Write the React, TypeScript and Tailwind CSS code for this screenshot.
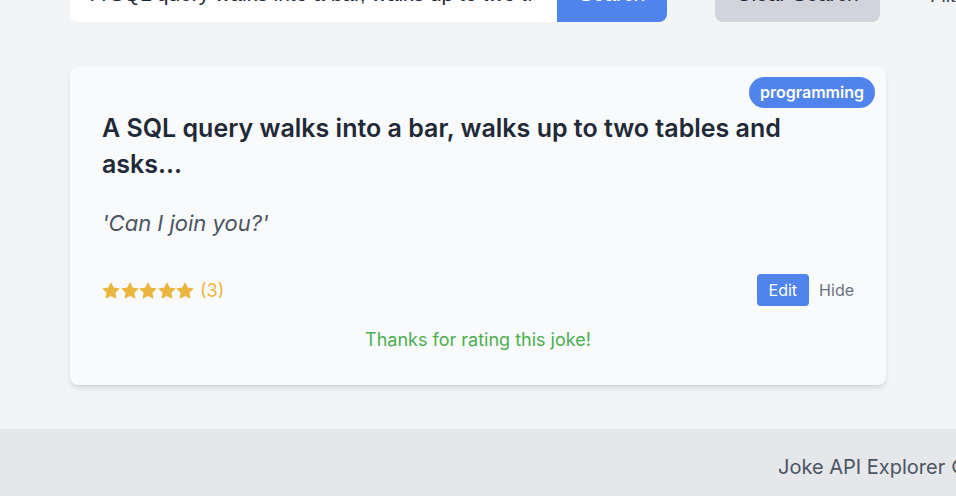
import React from "react";

function Star() {
  return (
    <svg width="18" height="17" viewBox="2 2 20 19.2" fill="#ebb63f" className="shrink-0">
      <path d="M12 2l3.09 6.26L22 9.27l-5 4.87 1.18 6.88L12 17.77l-6.18 3.25L7 14.14 2 9.27l6.91-1.01L12 2z" />
    </svg>
  );
}

export default function App() {
  return (
    <div
      className="w-[956px] h-[496px] overflow-hidden bg-[#f3f4f6]"
      style={{ fontFamily: "Inter, 'Noto Sans', sans-serif" }}
    >
      <div className="px-[70px]">
        <div
          className="-mt-[34px] flex w-[1000px] items-center whitespace-nowrap"
          style={{ fontFamily: "'Liberation Sans', Arial, sans-serif" }}
        >
          <div className="flex h-[56px] w-[487px] shrink-0 items-center overflow-hidden rounded-l-lg bg-white pl-[21px] pr-[26px] text-[21px] text-[#1f2937]">
            <span className="block overflow-hidden">A SQL query walks into a bar, walks up to two tables and asks...</span>
          </div>
          <div className="flex h-[56px] w-[110px] shrink-0 items-center justify-center rounded-r-lg bg-[#4f84ed] text-[21px] text-white">
            Search
          </div>
          <div className="ml-[48px] flex h-[56px] w-[165px] shrink-0 items-center justify-center rounded-lg bg-[#d1d5db] text-[21px] text-[#1f2937]">
            Clear Search
          </div>
          <div className="ml-[50px] mt-[4px] shrink-0 text-[19px] text-[#374151]">Filter by category:</div>
        </div>

        <div className="relative mt-[45px] rounded-lg bg-[#f9fafb] px-8 pt-[43px] pb-[31px] shadow-md">
          <span className="absolute right-[11px] top-[10px] rounded-full bg-[#4f84ed] px-[11px] py-[5px] text-[16px] font-semibold leading-[21px] text-white">
            programming
          </span>
          <h2 className="pr-[60px] text-[25px] font-semibold leading-9 text-[#1f2937]">
            A SQL query walks into a bar, walks up to two tables and asks...
          </h2>
          <p className="mt-[26px] text-[22px] italic leading-[30px] text-[#4b5563]">'Can I join you?'</p>
          <div className="mt-[36px] flex items-center justify-between">
            <div className="flex items-center">
              <div className="flex gap-[0.5px]">
                <Star />
                <Star />
                <Star />
                <Star />
                <Star />
              </div>
              <span className="ml-[6px] text-[18px] text-[#ebb63f]">(3)</span>
            </div>
            <div className="flex items-center">
              <button className="h-[32px] rounded bg-[#4f84ed] px-3 text-[16px] text-white">Edit</button>
              <span className="ml-[10px] text-[16px] text-[#6b7280]">Hide</span>
            </div>
          </div>
          <p className="mt-[20px] text-center text-[18px] leading-7 text-[#4caf50]">Thanks for rating this joke!</p>
        </div>
      </div>

      <footer className="mt-[44px] h-[100px] whitespace-nowrap bg-[#e5e7eb] pt-6 pl-[778px]">
        <span className="text-[20px] leading-7 text-[#4b5563]">Joke API Explorer © 2024</span>
      </footer>
    </div>
  );
}
